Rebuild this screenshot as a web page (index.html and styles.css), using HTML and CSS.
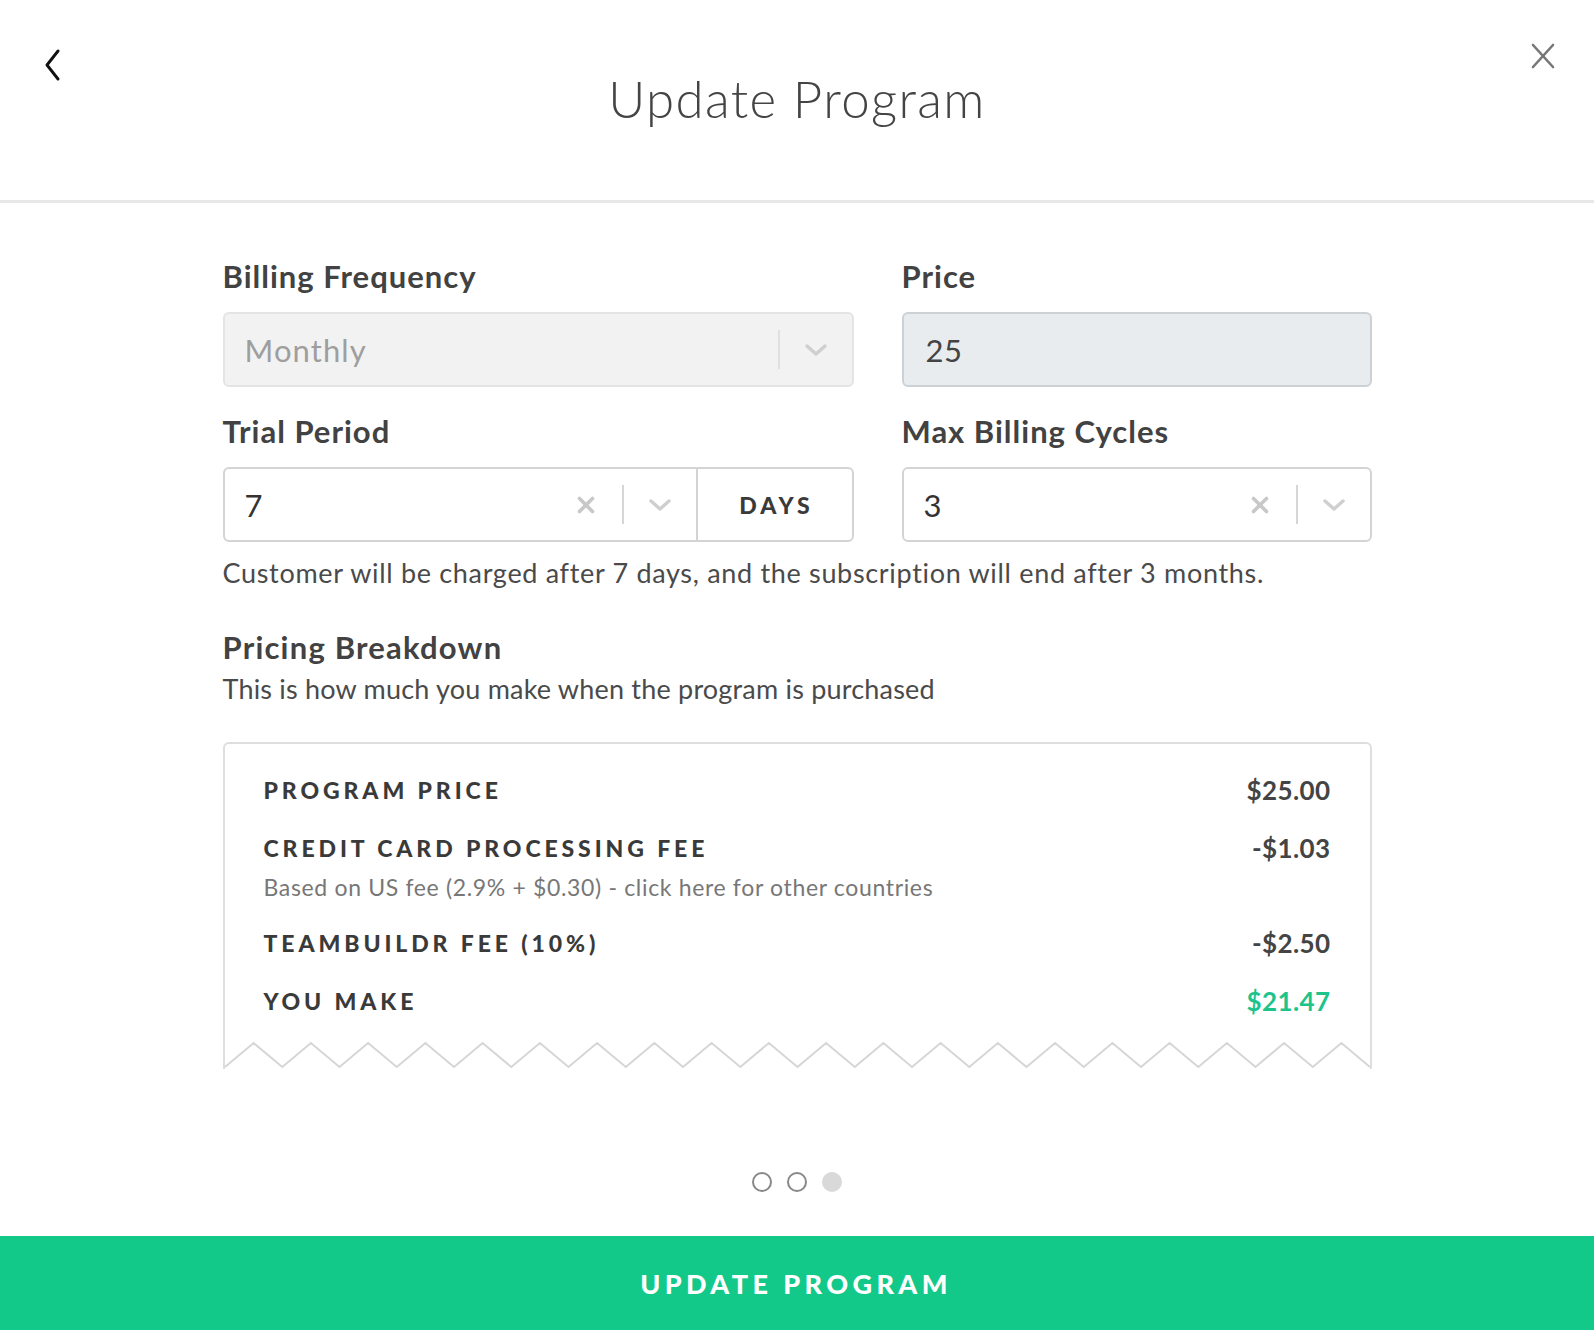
FILE: index.html
```html
<!DOCTYPE html>
<html lang="en">
<head>
<meta charset="utf-8">
<title>Update Program</title>
<link rel="stylesheet" href="styles.css">
</head>
<body>
<div class="page">
  <header class="header">
    <button class="icon-btn back-btn" aria-label="Back">
      <svg width="16" height="32" viewBox="0 0 16 32"><polyline points="14,2 3,16 14,30" fill="none" stroke="#111" stroke-width="2.9" stroke-linecap="round" stroke-linejoin="round"/></svg>
    </button>
    <h1 class="title">Update Program</h1>
    <button class="icon-btn close-btn" aria-label="Close">
      <svg width="26" height="28" viewBox="0 0 26 28"><line x1="3" y1="3" x2="23" y2="25" stroke="#777" stroke-width="2.6" stroke-linecap="round"/><line x1="23" y1="3" x2="3" y2="25" stroke="#777" stroke-width="2.6" stroke-linecap="round"/></svg>
    </button>
  </header>

  <main class="content">
    <div class="fields">
      <div class="field">
        <div class="field-label">Billing Frequency</div>
        <div class="control control-disabled">
          <div class="value value-muted">Monthly</div>
          <span class="sep sep-light"></span>
          <span class="indicator">
            <svg width="24" height="14" viewBox="0 0 24 14"><polyline points="3,3 12,11 21,3" fill="none" stroke="#cfcfcf" stroke-width="3.4" stroke-linecap="round" stroke-linejoin="round"/></svg>
          </span>
        </div>
      </div>
      <div class="field">
        <div class="field-label">Price</div>
        <div class="control control-price">
          <div class="value value-price">25</div>
        </div>
      </div>
      <div class="field">
        <div class="field-label">Trial Period</div>
        <div class="control">
          <div class="value">7</div>
          <span class="indicator">
            <svg width="18" height="18" viewBox="0 0 18 18"><line x1="2.5" y1="2.5" x2="15.5" y2="15.5" stroke="#c8c8c8" stroke-width="3.6" stroke-linecap="round"/><line x1="15.5" y1="2.5" x2="2.5" y2="15.5" stroke="#c8c8c8" stroke-width="3.6" stroke-linecap="round"/></svg>
          </span>
          <span class="sep"></span>
          <span class="indicator">
            <svg width="24" height="14" viewBox="0 0 24 14"><polyline points="3,3 12,11 21,3" fill="none" stroke="#cfcfcf" stroke-width="3.4" stroke-linecap="round" stroke-linejoin="round"/></svg>
          </span>
          <div class="unit">DAYS</div>
        </div>
      </div>
      <div class="field">
        <div class="field-label">Max Billing Cycles</div>
        <div class="control">
          <div class="value">3</div>
          <span class="indicator">
            <svg width="18" height="18" viewBox="0 0 18 18"><line x1="2.5" y1="2.5" x2="15.5" y2="15.5" stroke="#c8c8c8" stroke-width="3.6" stroke-linecap="round"/><line x1="15.5" y1="2.5" x2="2.5" y2="15.5" stroke="#c8c8c8" stroke-width="3.6" stroke-linecap="round"/></svg>
          </span>
          <span class="sep"></span>
          <span class="indicator">
            <svg width="24" height="14" viewBox="0 0 24 14"><polyline points="3,3 12,11 21,3" fill="none" stroke="#cfcfcf" stroke-width="3.4" stroke-linecap="round" stroke-linejoin="round"/></svg>
          </span>
        </div>
      </div>
    </div>

    <p class="summary">Customer will be charged after 7 days, and the subscription will end after 3 months.</p>

    <h2 class="section-title">Pricing Breakdown</h2>
    <p class="section-sub">This is how much you make when the program is purchased</p>

    <div class="receipt">
      <div class="line-item">
        <span class="item-label">PROGRAM PRICE</span>
        <span class="item-amount">$25.00</span>
      </div>
      <div class="line-item">
        <span class="item-label">CREDIT CARD PROCESSING FEE</span>
        <span class="item-amount">-$1.03</span>
      </div>
      <div class="item-note">Based on US fee (2.9% + $0.30) - click here for other countries</div>
      <div class="line-item after-note">
        <span class="item-label">TEAMBUILDR FEE (10%)</span>
        <span class="item-amount">-$2.50</span>
      </div>
      <div class="line-item">
        <span class="item-label">YOU MAKE</span>
        <span class="item-amount amount-green">$21.47</span>
      </div>
      <svg class="zigzag" width="1145" height="28" viewBox="0 0 1145 28" preserveAspectRatio="none">
        <polyline fill="none" stroke="#d6d6d6" stroke-width="2" points="0,26 28.6,2 57.3,26 85.9,2 114.5,26 143.1,2 171.8,26 200.4,2 229,26 257.6,2 286.3,26 314.9,2 343.5,26 372.1,2 400.8,26 429.4,2 458,26 486.6,2 515.3,26 543.9,2 572.5,26 601.1,2 629.8,26 658.4,2 687,26 715.6,2 744.3,26 772.9,2 801.5,26 830.1,2 858.8,26 887.4,2 916,26 944.6,2 973.3,26 1001.9,2 1030.5,26 1059.1,2 1087.8,26 1116.4,2 1145,26"/>
      </svg>
    </div>
  </main>

  <div class="dots">
    <span class="dot"></span>
    <span class="dot"></span>
    <span class="dot dot-active"></span>
  </div>

  <button class="submit">UPDATE PROGRAM</button>
</div>
</body>
</html>
```

FILE: styles.css
```css
* { box-sizing: border-box; }

html, body {
  margin: 0;
  padding: 0;
  background: #fff;
}

body {
  font-family: Lato, "Open Sans", "Liberation Sans", sans-serif;
  color: #444;
  overflow: hidden;
}

.page {
  width: 1594px;
  min-height: 1330px;
  display: flex;
  flex-direction: column;
}

.header {
  height: 203px;
  border-bottom: 3px solid #e8e8e8;
  display: grid;
  grid-template-columns: 1fr auto 1fr;
  align-items: start;
}

.icon-btn {
  background: none;
  border: 0;
  padding: 0;
  cursor: pointer;
  line-height: 0;
}

.back-btn {
  justify-self: start;
  margin: 49px 0 0 44px;
}

.close-btn {
  justify-self: end;
  margin: 42px 38px 0 0;
}

.title {
  margin: 69px 0 0;
  font-size: 51px;
  line-height: 60px;
  font-weight: 300;
  color: #444;
  letter-spacing: 1.4px;
}

.content {
  width: 1149px;
  margin: 0 auto;
  padding-top: 55px;
}

.fields {
  display: grid;
  grid-template-columns: 631px 470px;
  column-gap: 48px;
  row-gap: 26px;
}

.field-label {
  font-size: 31px;
  line-height: 36px;
  font-weight: 700;
  letter-spacing: 1px;
  color: #424242;
  margin-bottom: 18px;
}

.control {
  height: 75px;
  border: 2px solid #d4d4d4;
  border-radius: 6px;
  display: flex;
  align-items: center;
  background: #fff;
}

.control-disabled {
  background: #f2f2f2;
  border-color: #e4e4e4;
}

.control-price {
  background: #e9ecef;
  border-color: #ccd1d5;
}

.value {
  flex: 1;
  padding-left: 20px;
  font-size: 31px;
  color: #333;
}

.value-muted { color: #9e9e9e; letter-spacing: 1.1px; }
.value-price { padding-left: 22px; color: #444; letter-spacing: 0.5px; }

.sep {
  width: 2px;
  height: 39px;
  background: #d6d6d6;
}

.sep-light { background: #e0e0e0; }

.indicator {
  width: 72px;
  display: flex;
  justify-content: center;
  align-items: center;
  line-height: 0;
}

.unit {
  width: 156px;
  align-self: stretch;
  border-left: 2px solid #d4d4d4;
  display: flex;
  align-items: center;
  justify-content: center;
  font-size: 23px;
  font-weight: 900;
  letter-spacing: 4px;
  padding-left: 4px;
  color: #3a3a3a;
}

.summary {
  margin: 14px 0 0;
  font-size: 27px;
  line-height: 34px;
  letter-spacing: 0.68px;
  color: #4a4a4a;
}

.section-title {
  margin: 39px 0 0;
  font-size: 31px;
  line-height: 36px;
  font-weight: 700;
  letter-spacing: 1.2px;
  color: #424242;
}

.section-sub {
  margin: 7px 0 0;
  font-size: 27px;
  line-height: 34px;
  letter-spacing: 0.2px;
  color: #4a4a4a;
}

.receipt {
  margin-top: 36px;
  border: 2px solid #dedede;
  border-bottom: 0;
  border-radius: 6px 6px 0 0;
  padding-top: 31px;
}

.line-item {
  display: flex;
  justify-content: space-between;
  align-items: center;
  padding: 0 39px;
  line-height: 30px;
  margin-top: 28px;
}

.line-item:first-child { margin-top: 0; }
.line-item.after-note { margin-top: 27px; }

.item-label {
  font-size: 23px;
  font-weight: 900;
  letter-spacing: 3.9px;
  color: #3a3a3a;
}

.item-amount {
  font-size: 26px;
  font-weight: 700;
  letter-spacing: 0.4px;
  color: #444;
}

.amount-green { color: #1cc48c; }

.item-note {
  padding: 0 39px;
  margin-top: 10px;
  font-size: 23px;
  line-height: 28px;
  letter-spacing: 0.66px;
  color: #777;
}

.zigzag {
  display: block;
  margin-top: 25px;
}

.dots {
  margin-top: 103px;
  display: flex;
  justify-content: center;
  gap: 15px;
}

.dot {
  width: 20px;
  height: 20px;
  border-radius: 50%;
  border: 2px solid #888;
  background: #fff;
}

.dot-active {
  border-color: #d9d9d9;
  background: #d9d9d9;
}

.submit {
  margin-top: 44px;
  height: 94px;
  width: 100%;
  border: 0;
  background: #13c98a;
  color: #fff;
  font-family: Lato, "Open Sans", "Liberation Sans", sans-serif;
  font-size: 27px;
  font-weight: 900;
  letter-spacing: 4.4px;
  padding-left: 4px;
  cursor: pointer;
}
```
